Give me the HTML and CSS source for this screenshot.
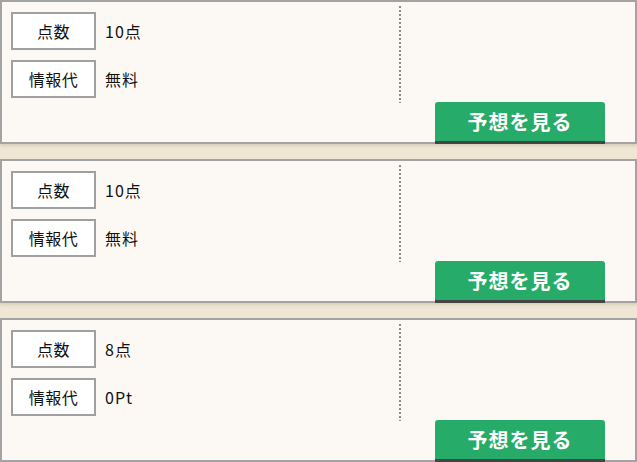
FILE: index.html
```html
<!DOCTYPE html>
<html lang="ja">
<head>
    <meta charset="UTF-8">
    <meta name="viewport" content="width=device-width, initial-scale=1.0">
    <title>予想一覧</title>
    <link rel="stylesheet" href="styles.css">
</head>
<body>

<div class="list">
    <div class="card">
        <div class="info">
            <div class="row">
                <span class="label">点数</span>
                <span class="value">10点</span>
            </div>
            <div class="row">
                <span class="label">情報代</span>
                <span class="value">無料</span>
            </div>
        </div>
        <div class="action">
            <a class="btn" href="#">予想を見る</a>
        </div>
    </div>

    <div class="card">
        <div class="info">
            <div class="row">
                <span class="label">点数</span>
                <span class="value">10点</span>
            </div>
            <div class="row">
                <span class="label">情報代</span>
                <span class="value">無料</span>
            </div>
        </div>
        <div class="action">
            <a class="btn" href="#">予想を見る</a>
        </div>
    </div>

    <div class="card">
        <div class="info">
            <div class="row">
                <span class="label">点数</span>
                <span class="value">8点</span>
            </div>
            <div class="row">
                <span class="label">情報代</span>
                <span class="value">0Pt</span>
            </div>
        </div>
        <div class="action">
            <a class="btn" href="#">予想を見る</a>
        </div>
    </div>
</div>

</body>
</html>
```

FILE: styles.css
```css
body {
    margin: 0;
    background-color: #efe7d3;
    font-family: "Noto Sans CJK JP", "Noto Sans", sans-serif;
    color: #111;
}
.list {
    display: flex;
    flex-direction: column;
    gap: 15px;
}
.card {
    display: flex;
    height: 140px;
    background-color: #fcf9f4;
    border: 2px solid #a3a3a3;
    box-shadow: 0 2px 3px rgba(120, 100, 60, 0.18);
}
/* dotted divider drawn as 2px squares */
.info {
    width: 390px;
    height: 91px;
    margin-top: 4px;
    padding: 6px 0 0 9px;
    background: linear-gradient(#8c8c8c 50%, transparent 50%) right top / 2px 4px repeat-y;
    display: flex;
    flex-direction: column;
    gap: 10px;
}
.row {
    display: flex;
    align-items: center;
}
.label {
    box-sizing: border-box;
    width: 85px;
    height: 38px;
    display: flex;
    align-items: center;
    justify-content: center;
    background-color: #fff;
    border: 2px solid #a0a0a0;
    font-size: 16px;
    letter-spacing: 0.5px;
}
.value {
    margin-left: 9px;
    font-size: 16px;
    letter-spacing: 1px;
}
.action {
    flex: 1;
    display: flex;
    justify-content: flex-end;
    align-items: flex-end;
    padding-right: 30px;
    margin-bottom: -2px;
}
.btn {
    box-sizing: border-box;
    width: 170px;
    height: 42px;
    display: flex;
    align-items: center;
    justify-content: center;
    background-color: #26ac68;
    border-bottom: 3px solid #444;
    border-radius: 3px 3px 0 0;
    color: #fff;
    font-size: 20px;
    font-weight: bold;
    letter-spacing: 1px;
    text-decoration: none;
}
```
